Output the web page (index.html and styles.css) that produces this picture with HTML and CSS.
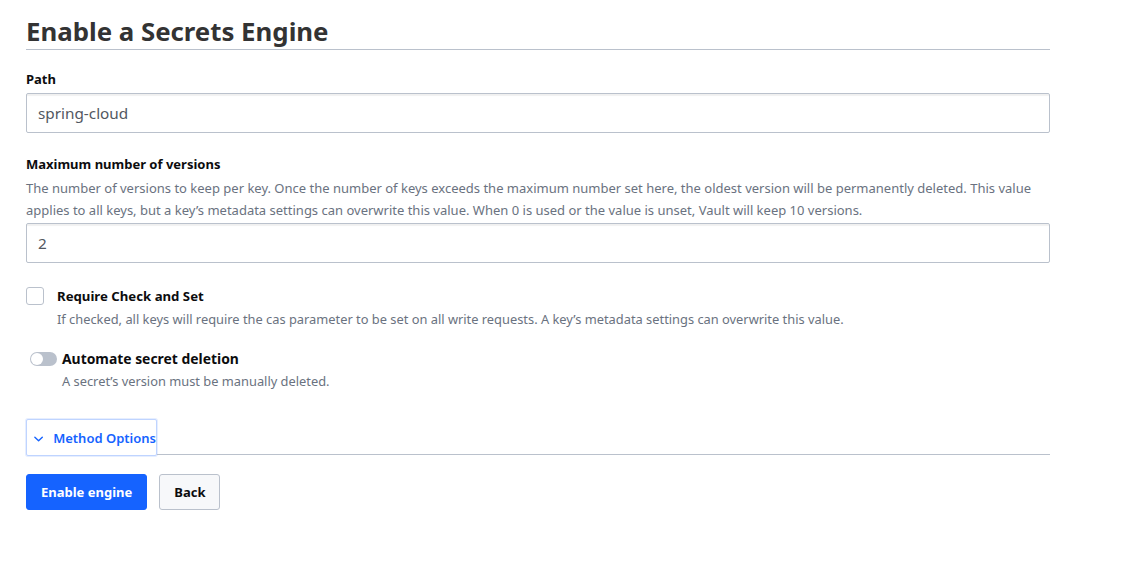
FILE: index.html
```html
<!DOCTYPE html>
<html>
<head>
<meta charset="utf-8">
<link rel="stylesheet" href="styles.css">
</head>
<body>
<div class="page">
  <h1 class="title">Enable a Secrets Engine</h1>

  <div class="field">
    <label class="label">Path</label>
    <input class="input" type="text" value="spring-cloud">
  </div>

  <div class="field field-versions">
    <label class="label">Maximum number of versions</label>
    <p class="help">The number of versions to keep per key. Once the number of keys exceeds the maximum number set here, the oldest version will be permanently deleted. This value applies to all keys, but a key’s metadata settings can overwrite this value. When 0 is used or the value is unset, Vault will keep 10 versions.</p>
    <input class="input" type="text" value="2">
  </div>

  <div class="check-row">
    <span class="checkbox"></span>
    <div class="check-text">
      <div class="check-label">Require Check and Set</div>
      <div class="sub-help">If checked, all keys will require the cas parameter to be set on all write requests. A key’s metadata settings can overwrite this value.</div>
    </div>
  </div>

  <div class="toggle-block">
    <div class="toggle-row">
      <span class="toggle"><span class="knob"></span></span>
      <span class="toggle-label">Automate secret deletion</span>
    </div>
    <div class="sub-help toggle-help">A secret’s version must be manually deleted.</div>
  </div>

  <div class="method-row">
    <button class="method-btn">
      <svg class="chev" width="12" height="8" viewBox="0 0 12 8"><path d="M2 2 L6 6 L10 2" fill="none" stroke="#1563ff" stroke-width="1.5" stroke-linecap="round" stroke-linejoin="round"/></svg>
      <span>Method Options</span>
    </button>
    <div class="method-line"></div>
  </div>

  <div class="actions">
    <button class="btn btn-primary">Enable engine</button>
    <button class="btn btn-secondary">Back</button>
  </div>
</div>
</body>
</html>
```

FILE: styles.css
```css
* { box-sizing: border-box; }
body {
  margin: 0;
  background: #fff;
  font-family: "Noto Sans", "Open Sans", sans-serif;
  color: #0c0c0e;
}
.page {
  width: 1024px;
  margin-left: 26px;
  padding-top: 14px;
}
.title {
  margin: 0;
  font-size: 25.8px;
  line-height: 35px;
  font-weight: 700;
  color: #333;
  border-bottom: 1px solid #bac1cc;
  padding-bottom: 0;
}
.field { margin-top: 20px; }
.label {
  display: block;
  font-size: 13px;
  font-weight: 700;
  line-height: 18px;
  color: #0c0c0e;
  margin-bottom: 5px;
}
.input {
  display: block;
  width: 100%;
  height: 40px;
  border: 1px solid #bac1cc;
  border-radius: 2px;
  box-shadow: inset 0 4px 1px -2px rgba(0,0,0,0.06);
  font-family: inherit;
  font-size: 15.3px;
  color: #525761;
  padding: 0 11px;
  outline: none;
}
.field-versions { margin-top: 22px; }
.field-versions .label { margin-bottom: 4px; }
.help {
  margin: 0 0 2px;
  font-size: 13px;
  line-height: 22px;
  color: #6a7280;
}
.check-row {
  display: flex;
  margin-top: 24px;
}
.checkbox {
  width: 18px;
  height: 18px;
  border: 1px solid #bac1cc;
  border-radius: 3px;
  margin-top: 0;
  flex: none;
}
.check-text { margin-left: 13px; }
.check-label {
  font-size: 13.2px;
  font-weight: 700;
  line-height: 18px;
  color: #0c0c0e;
}
.sub-help {
  font-size: 12.85px;
  line-height: 18px;
  color: #6a7280;
  margin-top: 5px;
}
.toggle-block { margin-top: 21px; }
.toggle-row {
  display: flex;
  align-items: center;
  margin-left: 4px;
}
.toggle {
  position: relative;
  width: 27px;
  height: 14px;
  border-radius: 7px;
  background: #bac1cc;
  flex: none;
}
.knob {
  position: absolute;
  left: 1px;
  top: 1px;
  width: 12px;
  height: 12px;
  border-radius: 50%;
  background: #fff;
}
.toggle-label {
  margin-left: 5px;
  font-size: 13.9px;
  font-weight: 700;
  line-height: 20px;
  color: #0c0c0e;
}
.toggle-help { margin-left: 36px; margin-top: 3px; }
.method-row {
  display: flex;
  align-items: flex-end;
  margin-top: 29px;
}
.method-btn {
  display: flex;
  align-items: center;
  height: 37px;
  width: 131px;
  padding: 0 0 0 6px;
  background: #fff;
  border: 1px solid #bfd4ff;
  border-radius: 2px;
  box-shadow: 0 0 0 1px #e6eeff;
  font-family: inherit;
  font-size: 13px;
  font-weight: 600;
  color: #1563ff;
  white-space: nowrap;
  flex: none;
}
.chev { margin-right: 9px; margin-top: 2px; }
.method-line {
  flex: 1;
  height: 1px;
  background: #bac1cc;
  margin-bottom: 1px;
}
.actions {
  display: flex;
  gap: 12px;
  margin-top: 18px;
}
.btn {
  height: 36px;
  border-radius: 3px;
  font-family: inherit;
  font-size: 13px;
  font-weight: 700;
  padding: 0 14px;
}
.btn-primary {
  background: #1563ff;
  border: 1px solid #1563ff;
  color: #fff;
}
.btn-secondary {
  background: #f7f8fa;
  border: 1px solid #bac1cc;
  color: #0c0c0e;
}
```
